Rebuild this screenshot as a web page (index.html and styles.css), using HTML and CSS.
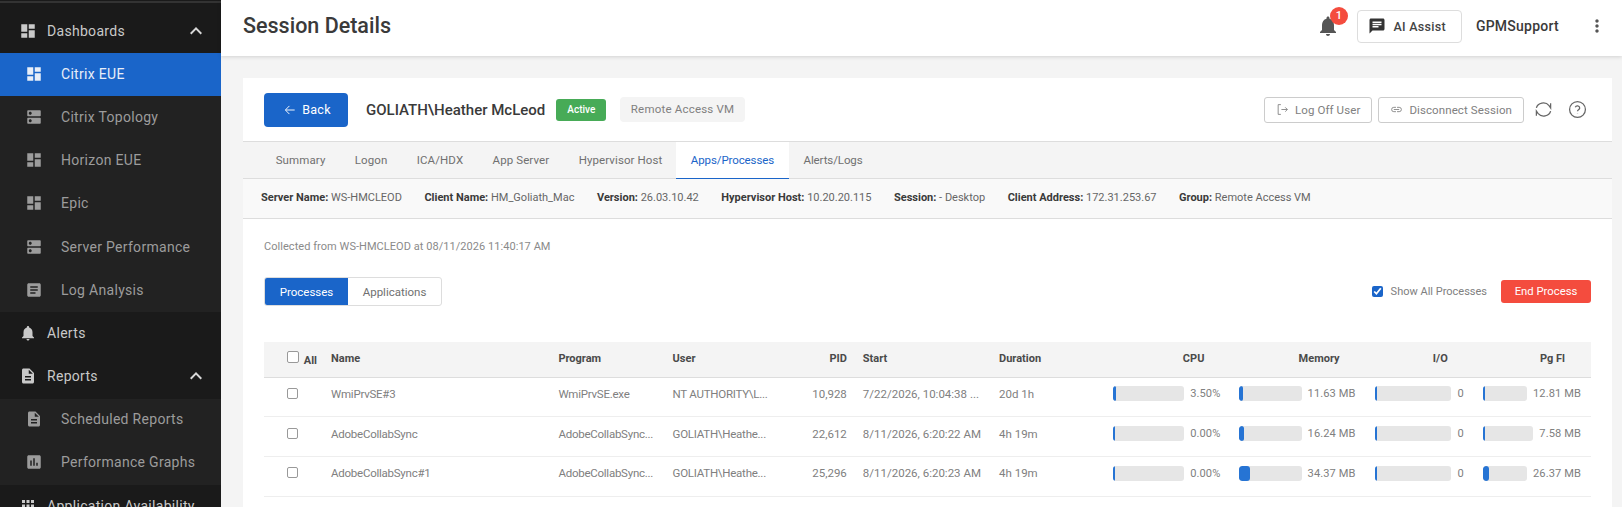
FILE: index.html
```html
<!DOCTYPE html>
<html>
<head>
	<meta charset="UTF-8">
	<title>Session Details</title>
	<link rel="stylesheet" href="styles.css">
</head>
<body>
	<svg class="defs" width="0" height="0">
		<symbol id="i-dash" viewBox="0 0 24 24"><path d="M3 13h8V3H3v10zm0 8h8v-6H3v6zm10 0h8V11h-8v10zm0-18v6h8V3h-8z"/></symbol>
		<symbol id="i-dns" viewBox="0 0 24 24"><path d="M20 13H4c-.55 0-1 .45-1 1v6c0 .55.45 1 1 1h16c.55 0 1-.45 1-1v-6c0-.55-.45-1-1-1zM7 19c-1.1 0-2-.9-2-2s.9-2 2-2 2 .9 2 2-.9 2-2 2zM20 3H4c-.55 0-1 .45-1 1v6c0 .55.45 1 1 1h16c.55 0 1-.45 1-1V4c0-.55-.45-1-1-1zM7 9c-1.1 0-2-.9-2-2s.9-2 2-2 2 .9 2 2-.9 2-2 2z"/></symbol>
		<symbol id="i-article" viewBox="0 0 24 24"><path d="M19 3H5c-1.1 0-2 .9-2 2v14c0 1.1.9 2 2 2h14c1.1 0 2-.9 2-2V5c0-1.1-.9-2-2-2zm-5 14H7v-2h7v2zm3-4H7v-2h10v2zm0-4H7V7h10v2z"/></symbol>
		<symbol id="i-bell" viewBox="0 0 24 24"><path d="M12 22c1.1 0 2-.9 2-2h-4c0 1.1.89 2 2 2zm6-6v-5c0-3.07-1.64-5.64-4.5-6.32V4c0-.83-.67-1.5-1.5-1.5s-1.5.67-1.5 1.5v.68C7.63 5.36 6 7.92 6 11v5l-2 2v1h16v-1l-2-2z"/></symbol>
		<symbol id="i-doc" viewBox="0 0 24 24"><path d="M14 2H6c-1.1 0-1.99.9-1.99 2L4 20c0 1.1.89 2 1.99 2H18c1.1 0 2-.9 2-2V8l-6-6zm2 16H8v-2h8v2zm0-4H8v-2h8v2zm-3-5V3.5L18.5 9H13z"/></symbol>
		<symbol id="i-graph" viewBox="0 0 24 24"><path d="M19 3H5c-1.1 0-2 .9-2 2v14c0 1.1.9 2 2 2h14c1.1 0 2-.9 2-2V5c0-1.1-.9-2-2-2zM9 17H7v-7h2v7zm4 0h-2V7h2v10zm4 0h-2v-4h2v4z"/></symbol>
		<symbol id="i-apps" viewBox="0 0 24 24"><path d="M4 8h4V4H4v4zm6 12h4v-4h-4v4zm-6 0h4v-4H4v4zm0-6h4v-4H4v4zm6 0h4v-4h-4v4zm6-10v4h4V4h-4zm-6 4h4V4h-4v4zm6 6h4v-4h-4v4zm0 6h4v-4h-4v4z"/></symbol>
		<symbol id="i-up" viewBox="0 0 24 24"><path d="M12 8l-6 6 1.41 1.41L12 10.83l4.59 4.58L18 14z"/></symbol>
	</svg>

	<div class="app">
		<div class="sidebar">
			<div class="side-top"></div>
			<a class="side-item parent"><svg class="side-icon"><use href="#i-dash"/></svg><span>Dashboards</span><svg class="chev"><use href="#i-up"/></svg></a>
			<a class="side-item sub active"><svg class="side-icon"><use href="#i-dash"/></svg><span>Citrix EUE</span></a>
			<a class="side-item sub"><svg class="side-icon"><use href="#i-dns"/></svg><span>Citrix Topology</span></a>
			<a class="side-item sub"><svg class="side-icon"><use href="#i-dash"/></svg><span>Horizon EUE</span></a>
			<a class="side-item sub"><svg class="side-icon"><use href="#i-dash"/></svg><span>Epic</span></a>
			<a class="side-item sub"><svg class="side-icon"><use href="#i-dns"/></svg><span>Server Performance</span></a>
			<a class="side-item sub"><svg class="side-icon"><use href="#i-article"/></svg><span>Log Analysis</span></a>
			<a class="side-item parent"><svg class="side-icon"><use href="#i-bell"/></svg><span>Alerts</span></a>
			<a class="side-item parent"><svg class="side-icon"><use href="#i-doc"/></svg><span>Reports</span><svg class="chev"><use href="#i-up"/></svg></a>
			<a class="side-item sub"><svg class="side-icon"><use href="#i-doc"/></svg><span>Scheduled Reports</span></a>
			<a class="side-item sub"><svg class="side-icon"><use href="#i-graph"/></svg><span>Performance Graphs</span></a>
			<a class="side-item parent"><svg class="side-icon"><use href="#i-apps"/></svg><span>Application Availability</span></a>
		</div>

		<div class="main">
			<div class="header">
				<h1 class="page-title">Session Details</h1>
				<div class="header-right">
					<div class="bell">
						<svg class="bell-icon"><use href="#i-bell"/></svg>
						<span class="bell-badge">1</span>
					</div>
					<button class="ai-btn">
						<svg class="ai-icon" viewBox="0 0 24 24"><path d="M20 2H4c-1.1 0-1.99.9-1.99 2L2 22l4-4h14c1.1 0 2-.9 2-2V4c0-1.1-.9-2-2-2zM6 9h12v2H6V9zm8 5H6v-2h8v2zm4-6H6V6h12v2z"/></svg>
						AI Assist
					</button>
					<span class="user-name">GPMSupport</span>
					<svg class="more" viewBox="0 0 24 24"><path d="M12 8c1.1 0 2-.9 2-2s-.9-2-2-2-2 .9-2 2 .9 2 2 2zm0 2c-1.1 0-2 .9-2 2s.9 2 2 2 2-.9 2-2-.9-2-2-2zm0 6c-1.1 0-2 .9-2 2s.9 2 2 2 2-.9 2-2-.9-2-2-2z"/></svg>
				</div>
			</div>

			<div class="card">
				<div class="session-top">
					<button class="back-btn">
						<svg class="line-icon" viewBox="0 0 24 24"><path d="M20 12H5M11 5l-7 7 7 7"/></svg>
						Back
					</button>
					<span class="session-user">GOLIATH\Heather McLeod</span>
					<span class="badge-active">Active</span>
					<span class="chip">Remote Access VM</span>
					<div class="session-actions">
						<button class="outline-btn">
							<svg class="line-icon" viewBox="0 0 24 24"><path d="M9 3H4v18h5M10 12h11M17 8l4 4-4 4"/></svg>
							Log Off User
						</button>
						<button class="outline-btn">
							<svg class="line-icon" viewBox="0 0 24 24"><path d="M11 8H7a4 4 0 0 0 0 8h4M13 8h4a4 4 0 0 1 0 8h-4M7 12h10"/></svg>
							Disconnect Session
						</button>
						<svg class="tool-icon refresh" viewBox="0 0 24 24"><path d="M3 10a9 8 0 0 1 16-3l2 3V4M21 14a9 8 0 0 1-16 3l-2-3v6"/></svg>
						<svg class="tool-icon" viewBox="0 0 24 24"><circle cx="12" cy="12" r="10"/><path d="M9.2 9.2a2.9 2.9 0 0 1 5.6 1c0 2-2.8 2.4-2.8 4"/><path d="M12 17.2v.3"/></svg>
					</div>
				</div>

				<div class="tabs">
					<a class="tab">Summary</a>
					<a class="tab">Logon</a>
					<a class="tab">ICA/HDX</a>
					<a class="tab">App Server</a>
					<a class="tab">Hypervisor Host</a>
					<a class="tab current">Apps/Processes</a>
					<a class="tab">Alerts/Logs</a>
				</div>

				<div class="info-bar">
					<span><b>Server Name:</b> WS-HMCLEOD</span>
					<span><b>Client Name:</b> HM_Goliath_Mac</span>
					<span><b>Version:</b> 26.03.10.42</span>
					<span><b>Hypervisor Host:</b> 10.20.20.115</span>
					<span><b>Session:</b> - Desktop</span>
					<span><b>Client Address:</b> 172.31.253.67</span>
					<span><b>Group:</b> Remote Access VM</span>
				</div>

				<div class="content">
					<p class="collected">Collected from WS-HMCLEOD at 08/11/2026 11:40:17 AM</p>

					<div class="toolbar">
						<div class="toggle">
							<span class="toggle-item on">Processes</span>
							<span class="toggle-item">Applications</span>
						</div>
						<div class="toolbar-right">
							<label class="show-all"><input type="checkbox" checked> Show All Processes</label>
							<button class="end-btn">End Process</button>
						</div>
					</div>

					<table class="proc-table">
						<thead>
							<tr>
								<th class="c-check"><input class="box box-head" type="checkbox"> <span class="all-label">All</span></th>
								<th class="c-name">Name</th>
								<th class="c-prog">Program</th>
								<th class="c-user">User</th>
								<th class="c-pid num">PID</th>
								<th class="c-start">Start</th>
								<th class="c-dur">Duration</th>
								<th class="c-cpu metric-head">CPU</th>
								<th class="c-mem metric-head">Memory</th>
								<th class="c-io metric-head">I/O</th>
								<th class="c-pg metric-head">Pg Fl</th>
							</tr>
						</thead>
						<tbody>
							<tr>
								<td class="c-check"><input class="box" type="checkbox"></td>
								<td class="tight">WmiPrvSE#3</td>
								<td class="tight">WmiPrvSE.exe</td>
								<td class="tight">NT AUTHORITY\L...</td>
								<td class="num">10,928</td>
								<td>7/22/2026, 10:04:38 ...</td>
								<td>20d 1h</td>
								<td><div class="metric"><div class="bar"><div class="fill" style="width:4%"></div></div><span>3.50%</span></div></td>
								<td><div class="metric"><div class="bar"><div class="fill" style="width:6%"></div></div><span>11.63 MB</span></div></td>
								<td><div class="metric"><div class="bar"><div class="fill" style="width:2%"></div></div><span>0</span></div></td>
								<td><div class="metric"><div class="bar"><div class="fill" style="width:6%"></div></div><span>12.81 MB</span></div></td>
							</tr>
							<tr>
								<td class="c-check"><input class="box" type="checkbox"></td>
								<td class="tight">AdobeCollabSync</td>
								<td class="tight">AdobeCollabSync...</td>
								<td class="tight">GOLIATH\Heathe...</td>
								<td class="num">22,612</td>
								<td>8/11/2026, 6:20:22 AM</td>
								<td>4h 19m</td>
								<td><div class="metric"><div class="bar"><div class="fill" style="width:2%"></div></div><span>0.00%</span></div></td>
								<td><div class="metric"><div class="bar"><div class="fill" style="width:8%"></div></div><span>16.24 MB</span></div></td>
								<td><div class="metric"><div class="bar"><div class="fill" style="width:2%"></div></div><span>0</span></div></td>
								<td><div class="metric"><div class="bar"><div class="fill" style="width:4%"></div></div><span>7.58 MB</span></div></td>
							</tr>
							<tr>
								<td class="c-check"><input class="box" type="checkbox"></td>
								<td class="tight">AdobeCollabSync#1</td>
								<td class="tight">AdobeCollabSync...</td>
								<td class="tight">GOLIATH\Heathe...</td>
								<td class="num">25,296</td>
								<td>8/11/2026, 6:20:23 AM</td>
								<td>4h 19m</td>
								<td><div class="metric"><div class="bar"><div class="fill" style="width:2%"></div></div><span>0.00%</span></div></td>
								<td><div class="metric"><div class="bar"><div class="fill" style="width:17%"></div></div><span>34.37 MB</span></div></td>
								<td><div class="metric"><div class="bar"><div class="fill" style="width:2%"></div></div><span>0</span></div></td>
								<td><div class="metric"><div class="bar"><div class="fill" style="width:13%"></div></div><span>26.37 MB</span></div></td>
							</tr>
							<tr>
								<td class="c-check"><input class="box" type="checkbox"></td>
								<td colspan="10"></td>
							</tr>
						</tbody>
					</table>
				</div>
			</div>
		</div>
	</div>
</body>
</html>
```

FILE: styles.css
```css
* {
	padding: 0;
	margin: 0;
	box-sizing: border-box;
}
html, body {
	height: 507px;
	overflow: hidden;
}
body {
	font-family: Roboto, "Liberation Sans", sans-serif;
	background: #f4f4f4;
	color: #666;
}
.defs {
	position: absolute;
}
.app {
	display: flex;
	height: 507px;
}
button {
	font-family: inherit;
}

/* sidebar */
.sidebar {
	width: 221px;
	flex-shrink: 0;
	background: #1a1a1a;
	overflow: hidden;
}
.side-top {
	height: 10px;
	border-top: 1px solid transparent;
	box-shadow: inset 0 2px 0 #333;
}
.side-item {
	display: flex;
	align-items: center;
	height: 43.2px;
	padding-bottom: 2px;
	font-size: 14px;
	letter-spacing: 0.3px;
}
.side-item.parent {
	color: #c9c9c9;
	padding-left: 19px;
	background: #1a1a1a;
}
.side-item.sub {
	color: #9c9c9c;
	padding-left: 25px;
	background: #222;
}
.side-item.active {
	background: #1a65c9;
	color: #e8eef8;
}
.side-icon {
	width: 18px;
	height: 18px;
	fill: currentColor;
	flex-shrink: 0;
	margin-right: 10px;
}
.sub .side-icon {
	margin-right: 18px;
}
.chev {
	width: 24px;
	height: 24px;
	fill: #d8d8d8;
	margin-left: auto;
	margin-right: 13px;
}

/* header */
.main {
	flex: 1;
	min-width: 0;
}
.header {
	height: 56px;
	background: #fff;
	box-shadow: 0 1px 4px rgba(0,0,0,0.14);
	display: flex;
	align-items: center;
	padding: 0 15px 4px 22px;
	position: relative;
}
.page-title {
	font-size: 21.5px;
	font-weight: 500;
	color: #3a3a3a;
	margin-bottom: 2px;
}
.header-right {
	margin-left: auto;
	display: flex;
	align-items: center;
}
.bell {
	position: relative;
	width: 24px;
	height: 24px;
	margin-right: 17px;
}
.bell-icon {
	width: 24px;
	height: 24px;
	fill: #555;
}
.bell-badge {
	position: absolute;
	top: -7px;
	left: 14px;
	width: 18px;
	height: 18px;
	border-radius: 50%;
	background: #f44c3e;
	color: #fff;
	font-size: 11px;
	font-weight: 500;
	line-height: 18px;
	text-align: center;
}
.ai-btn {
	width: 105px;
	height: 33px;
	background: #fff;
	border: 1px solid #ddd;
	border-radius: 4px;
	display: flex;
	align-items: center;
	padding-left: 10px;
	font-size: 12.5px;
	font-weight: 500;
	letter-spacing: 0.3px;
	color: #444;
}
.ai-icon {
	width: 18px;
	height: 18px;
	fill: #333;
	margin-right: 7.5px;
}
.user-name {
	font-size: 14px;
	font-weight: 500;
	color: #3a3a3a;
	margin-left: 14px;
	letter-spacing: 0.25px;
}
.more {
	width: 20px;
	height: 20px;
	fill: #555;
	margin-left: 28px;
}

/* card */
.card {
	margin: 22px 10px 0 22px;
	background: #fff;
}
.session-top {
	height: 64px;
	display: flex;
	align-items: center;
	padding: 0 25px 0 21px;
	border-bottom: 1px solid #ddd;
}
.back-btn {
	width: 84px;
	height: 34px;
	background: #1a65c9;
	color: #fff;
	border: none;
	border-radius: 4px;
	padding-left: 2px;
	font-size: 12.5px;
	letter-spacing: 0.3px;
	display: flex;
	align-items: center;
	justify-content: center;
	gap: 5px;
}
.line-icon {
	width: 13px;
	height: 13px;
	fill: none;
	stroke: currentColor;
	stroke-width: 1.6;
}
.back-btn .line-icon {
	width: 14px;
	height: 14px;
}
.session-user {
	margin-left: 18px;
	font-size: 15px;
	font-weight: 500;
	color: #3a3a3a;
}
.badge-active {
	margin-left: 11px;
	width: 50px;
	height: 22px;
	line-height: 22px;
	text-align: center;
	background: #47ab57;
	color: #fff;
	font-size: 10px;
	font-weight: 500;
	border-radius: 3px;
}
.chip {
	margin-left: 14px;
	height: 25px;
	line-height: 25px;
	padding: 0 10.5px;
	background: #f4f4f4;
	border-radius: 4px;
	font-size: 11.5px;
	letter-spacing: 0.2px;
	color: #808080;
}
.session-actions {
	margin-left: auto;
	display: flex;
	align-items: center;
}
.outline-btn {
	height: 26px;
	padding: 0 11px;
	background: #fff;
	border: 1px solid #ccc;
	border-radius: 3px;
	color: #808080;
	font-size: 11.5px;
	letter-spacing: 0.1px;
	display: flex;
	align-items: center;
	gap: 6px;
	margin-right: 6px;
}
.tool-icon {
	width: 19px;
	height: 19px;
	fill: none;
	stroke: #666;
	stroke-width: 1.6;
	margin-left: 10px;
}
.tool-icon.refresh {
	margin-left: 4px;
	margin-right: 5px;
}
.tabs {
	height: 37px;
	background: #f4f4f4;
	border-bottom: 1px solid #ddd;
	display: flex;
	padding-left: 18px;
}
.tab {
	line-height: 37px;
	padding: 0 14.7px;
	font-size: 11.5px;
	letter-spacing: 0.1px;
	color: #707070;
}
.tab.current {
	background: #fff;
	color: #1a65c9;
	height: 37px;
	border-bottom: 1px solid #1a65c9;
	margin-left: -1px;
}
.tab.current, .tab.current ~ .tab {
	letter-spacing: -0.1px;
}
.info-bar {
	height: 40px;
	background: #f9f9f9;
	border-bottom: 1px solid #ddd;
	display: flex;
	align-items: center;
	gap: 22.5px;
	padding: 0 0 2px 18px;
	font-size: 11px;
	color: #666;
	white-space: nowrap;
}
.info-bar b {
	font-weight: 700;
	color: #3a3a3a;
}

/* process list */
.content {
	padding: 0 21px;
}
.collected {
	font-size: 11px;
	letter-spacing: 0.05px;
	color: #8a8a8a;
	padding-top: 21px;
	line-height: 13px;
}
.toolbar {
	display: flex;
	align-items: center;
	justify-content: space-between;
	margin-top: 24px;
	height: 29px;
}
.toggle {
	display: flex;
	height: 29px;
	border: 1px solid #ddd;
	border-radius: 3px;
	overflow: hidden;
}
.toggle-item {
	padding: 0 14.7px;
	line-height: 28px;
	font-size: 11.5px;
	color: #707070;
}
.toggle-item.on {
	background: #1a65c9;
	color: #fff;
}
.toolbar-right {
	display: flex;
	align-items: center;
}
.show-all {
	display: flex;
	align-items: center;
	gap: 8px;
	font-size: 11px;
	color: #808080;
	margin-right: 14px;
}
.show-all input {
	margin: 0;
	width: 11px;
	height: 11px;
	accent-color: #1a65c9;
}
.end-btn {
	width: 90px;
	height: 23px;
	background: #f44c3e;
	color: #fff;
	border: none;
	border-radius: 3px;
	font-size: 11.3px;
}
.proc-table {
	margin-top: 36px;
	width: 1327px;
	table-layout: fixed;
	border-collapse: collapse;
	font-size: 11.5px;
}
.proc-table th {
	height: 35px;
	background: #f4f4f4;
	border-bottom: 1px solid #ddd;
	font-size: 11px;
	font-weight: 700;
	color: #4a4a4a;
	text-align: left;
	padding: 0 8px 2px;
	white-space: nowrap;
}
.proc-table td {
	height: 39.7px;
	border-bottom: 1px solid #eee;
	color: #808080;
	padding: 0 8px 6px;
	white-space: nowrap;
	overflow: hidden;
}
.proc-table .c-check {
	width: 59px;
	padding-left: 23px;
	padding-right: 0;
}
.c-name { width: 227px; }
.c-prog { width: 114px; }
.c-user { width: 118px; }
.c-pid { width: 72px; }
.c-start { width: 136px; }
.c-dur { width: 113px; }
.c-cpu { width: 126px; }
.c-mem { width: 135px; }
.c-io { width: 108px; }
.c-pg { width: 117px; }
.proc-table .num {
	text-align: right;
}
.proc-table .tight {
	letter-spacing: -0.25px;
}
.proc-table .metric-head {
	text-align: right;
	padding-right: 26px;
}
.all-label {
	position: relative;
	top: 2px;
}
.box {
	appearance: none;
	display: inline-block;
	width: 11px;
	height: 11px;
	background: #fff;
	border: 1px solid #999;
	border-radius: 2px;
	vertical-align: middle;
	margin-top: -3px;
}
.box-head {
	width: 12px;
	height: 12px;
	margin-right: 2px;
	margin-top: -4px;
}
.metric {
	display: flex;
	align-items: center;
	gap: 6px;
	margin: 0 2px 0 1px;
	font-size: 11.1px;
	letter-spacing: 0.1px;
}
.bar {
	flex: 1;
	min-width: 0;
	height: 15px;
	background: #e6e6e6;
	border-radius: 3px;
	overflow: hidden;
}
.fill {
	height: 100%;
	min-width: 2px;
	background: #2674d4;
	border-radius: 3px;
}
```
